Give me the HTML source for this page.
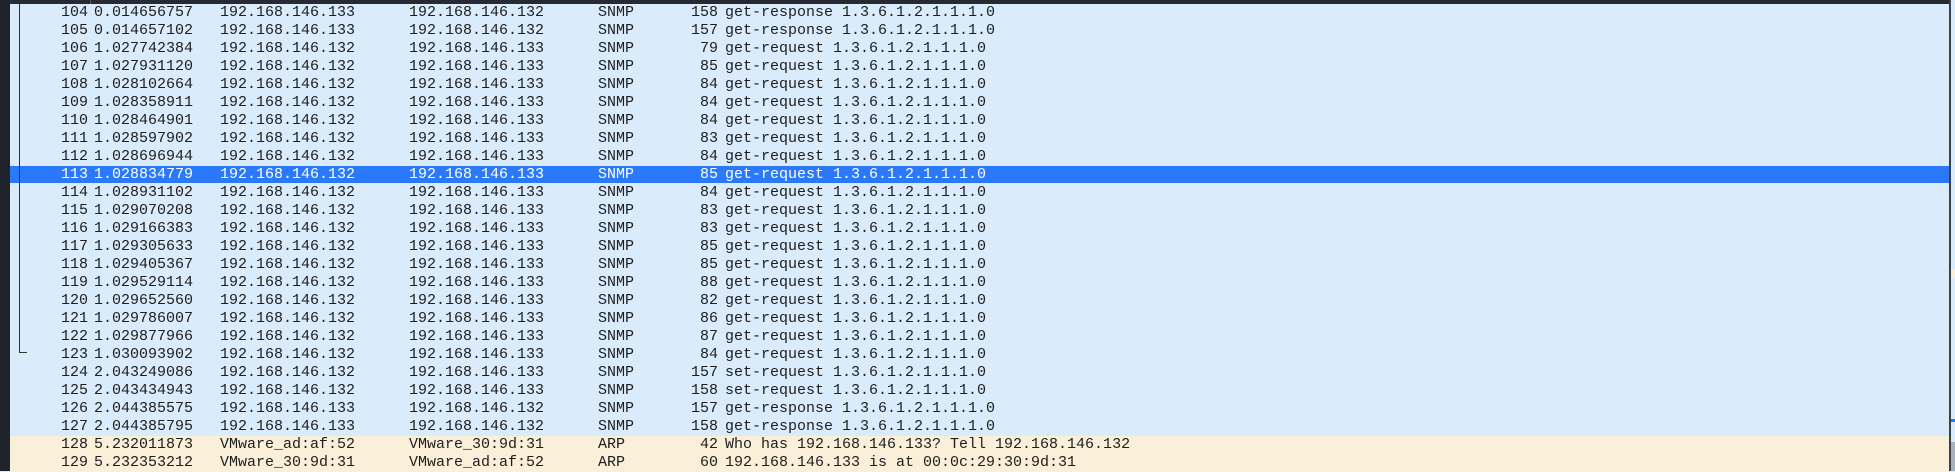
<!DOCTYPE html>
<html><head><style>
body{margin:0;width:1955px;height:471px;overflow:hidden;background:#daebfc;position:relative;font-family:"Liberation Mono",monospace;font-size:15px;color:#1e1e1e}
.hdr{position:absolute;left:0;top:0;width:1949px;height:4px;background:#262a33}
.l{position:absolute;left:0;top:0;width:10px;height:471px;background:#1f232b}
.r{position:absolute;top:4px;left:10px;width:1939px;height:18px;line-height:18px;white-space:pre}
.r span{position:absolute}
.n{right:calc(1939px - 78px);text-align:right}
.o{background:#faf0d9}
.s{background:#2a79fb;color:#fff}
.tree{position:absolute;left:19px;top:4px;width:1px;height:349px;background:#333}
.tree2{position:absolute;left:19px;top:352px;width:8px;height:1px;background:#333}
.sb{position:absolute;left:1949px;top:0;width:2px;height:471px;background:#3a3f48}
</style></head><body>
<div class="hdr"></div><div class="l"></div>
<div style="position:absolute;left:90px;top:0;width:1px;height:4px;background:#555"></div>
<div id="rows"></div>
<div class="r" style="top:4px"><span style="right:1861px">104</span><span style="left:84px">0.014656757</span><span style="left:210px">192.168.146.133</span><span style="left:399px">192.168.146.132</span><span style="left:588px">SNMP</span><span style="right:1231px">158</span><span style="left:715px">get-response 1.3.6.1.2.1.1.1.0</span></div>
<div class="r" style="top:22px"><span style="right:1861px">105</span><span style="left:84px">0.014657102</span><span style="left:210px">192.168.146.133</span><span style="left:399px">192.168.146.132</span><span style="left:588px">SNMP</span><span style="right:1231px">157</span><span style="left:715px">get-response 1.3.6.1.2.1.1.1.0</span></div>
<div class="r" style="top:40px"><span style="right:1861px">106</span><span style="left:84px">1.027742384</span><span style="left:210px">192.168.146.132</span><span style="left:399px">192.168.146.133</span><span style="left:588px">SNMP</span><span style="right:1231px">79</span><span style="left:715px">get-request 1.3.6.1.2.1.1.1.0</span></div>
<div class="r" style="top:58px"><span style="right:1861px">107</span><span style="left:84px">1.027931120</span><span style="left:210px">192.168.146.132</span><span style="left:399px">192.168.146.133</span><span style="left:588px">SNMP</span><span style="right:1231px">85</span><span style="left:715px">get-request 1.3.6.1.2.1.1.1.0</span></div>
<div class="r" style="top:76px"><span style="right:1861px">108</span><span style="left:84px">1.028102664</span><span style="left:210px">192.168.146.132</span><span style="left:399px">192.168.146.133</span><span style="left:588px">SNMP</span><span style="right:1231px">84</span><span style="left:715px">get-request 1.3.6.1.2.1.1.1.0</span></div>
<div class="r" style="top:94px"><span style="right:1861px">109</span><span style="left:84px">1.028358911</span><span style="left:210px">192.168.146.132</span><span style="left:399px">192.168.146.133</span><span style="left:588px">SNMP</span><span style="right:1231px">84</span><span style="left:715px">get-request 1.3.6.1.2.1.1.1.0</span></div>
<div class="r" style="top:112px"><span style="right:1861px">110</span><span style="left:84px">1.028464901</span><span style="left:210px">192.168.146.132</span><span style="left:399px">192.168.146.133</span><span style="left:588px">SNMP</span><span style="right:1231px">84</span><span style="left:715px">get-request 1.3.6.1.2.1.1.1.0</span></div>
<div class="r" style="top:130px"><span style="right:1861px">111</span><span style="left:84px">1.028597902</span><span style="left:210px">192.168.146.132</span><span style="left:399px">192.168.146.133</span><span style="left:588px">SNMP</span><span style="right:1231px">83</span><span style="left:715px">get-request 1.3.6.1.2.1.1.1.0</span></div>
<div class="r" style="top:148px"><span style="right:1861px">112</span><span style="left:84px">1.028696944</span><span style="left:210px">192.168.146.132</span><span style="left:399px">192.168.146.133</span><span style="left:588px">SNMP</span><span style="right:1231px">84</span><span style="left:715px">get-request 1.3.6.1.2.1.1.1.0</span></div>
<div class="r s" style="top:166px;height:17px"><span style="right:1861px">113</span><span style="left:84px">1.028834779</span><span style="left:210px">192.168.146.132</span><span style="left:399px">192.168.146.133</span><span style="left:588px">SNMP</span><span style="right:1231px">85</span><span style="left:715px">get-request 1.3.6.1.2.1.1.1.0</span></div>
<div class="r" style="top:184px"><span style="right:1861px">114</span><span style="left:84px">1.028931102</span><span style="left:210px">192.168.146.132</span><span style="left:399px">192.168.146.133</span><span style="left:588px">SNMP</span><span style="right:1231px">84</span><span style="left:715px">get-request 1.3.6.1.2.1.1.1.0</span></div>
<div class="r" style="top:202px"><span style="right:1861px">115</span><span style="left:84px">1.029070208</span><span style="left:210px">192.168.146.132</span><span style="left:399px">192.168.146.133</span><span style="left:588px">SNMP</span><span style="right:1231px">83</span><span style="left:715px">get-request 1.3.6.1.2.1.1.1.0</span></div>
<div class="r" style="top:220px"><span style="right:1861px">116</span><span style="left:84px">1.029166383</span><span style="left:210px">192.168.146.132</span><span style="left:399px">192.168.146.133</span><span style="left:588px">SNMP</span><span style="right:1231px">83</span><span style="left:715px">get-request 1.3.6.1.2.1.1.1.0</span></div>
<div class="r" style="top:238px"><span style="right:1861px">117</span><span style="left:84px">1.029305633</span><span style="left:210px">192.168.146.132</span><span style="left:399px">192.168.146.133</span><span style="left:588px">SNMP</span><span style="right:1231px">85</span><span style="left:715px">get-request 1.3.6.1.2.1.1.1.0</span></div>
<div class="r" style="top:256px"><span style="right:1861px">118</span><span style="left:84px">1.029405367</span><span style="left:210px">192.168.146.132</span><span style="left:399px">192.168.146.133</span><span style="left:588px">SNMP</span><span style="right:1231px">85</span><span style="left:715px">get-request 1.3.6.1.2.1.1.1.0</span></div>
<div class="r" style="top:274px"><span style="right:1861px">119</span><span style="left:84px">1.029529114</span><span style="left:210px">192.168.146.132</span><span style="left:399px">192.168.146.133</span><span style="left:588px">SNMP</span><span style="right:1231px">88</span><span style="left:715px">get-request 1.3.6.1.2.1.1.1.0</span></div>
<div class="r" style="top:292px"><span style="right:1861px">120</span><span style="left:84px">1.029652560</span><span style="left:210px">192.168.146.132</span><span style="left:399px">192.168.146.133</span><span style="left:588px">SNMP</span><span style="right:1231px">82</span><span style="left:715px">get-request 1.3.6.1.2.1.1.1.0</span></div>
<div class="r" style="top:310px"><span style="right:1861px">121</span><span style="left:84px">1.029786007</span><span style="left:210px">192.168.146.132</span><span style="left:399px">192.168.146.133</span><span style="left:588px">SNMP</span><span style="right:1231px">86</span><span style="left:715px">get-request 1.3.6.1.2.1.1.1.0</span></div>
<div class="r" style="top:328px"><span style="right:1861px">122</span><span style="left:84px">1.029877966</span><span style="left:210px">192.168.146.132</span><span style="left:399px">192.168.146.133</span><span style="left:588px">SNMP</span><span style="right:1231px">87</span><span style="left:715px">get-request 1.3.6.1.2.1.1.1.0</span></div>
<div class="r" style="top:346px"><span style="right:1861px">123</span><span style="left:84px">1.030093902</span><span style="left:210px">192.168.146.132</span><span style="left:399px">192.168.146.133</span><span style="left:588px">SNMP</span><span style="right:1231px">84</span><span style="left:715px">get-request 1.3.6.1.2.1.1.1.0</span></div>
<div class="r" style="top:364px"><span style="right:1861px">124</span><span style="left:84px">2.043249086</span><span style="left:210px">192.168.146.132</span><span style="left:399px">192.168.146.133</span><span style="left:588px">SNMP</span><span style="right:1231px">157</span><span style="left:715px">set-request 1.3.6.1.2.1.1.1.0</span></div>
<div class="r" style="top:382px"><span style="right:1861px">125</span><span style="left:84px">2.043434943</span><span style="left:210px">192.168.146.132</span><span style="left:399px">192.168.146.133</span><span style="left:588px">SNMP</span><span style="right:1231px">158</span><span style="left:715px">set-request 1.3.6.1.2.1.1.1.0</span></div>
<div class="r" style="top:400px"><span style="right:1861px">126</span><span style="left:84px">2.044385575</span><span style="left:210px">192.168.146.133</span><span style="left:399px">192.168.146.132</span><span style="left:588px">SNMP</span><span style="right:1231px">157</span><span style="left:715px">get-response 1.3.6.1.2.1.1.1.0</span></div>
<div class="r" style="top:418px"><span style="right:1861px">127</span><span style="left:84px">2.044385795</span><span style="left:210px">192.168.146.133</span><span style="left:399px">192.168.146.132</span><span style="left:588px">SNMP</span><span style="right:1231px">158</span><span style="left:715px">get-response 1.3.6.1.2.1.1.1.0</span></div>
<div class="r o" style="top:436px"><span style="right:1861px">128</span><span style="left:84px">5.232011873</span><span style="left:210px">VMware_ad:af:52</span><span style="left:399px">VMware_30:9d:31</span><span style="left:588px">ARP</span><span style="right:1231px">42</span><span style="left:715px">Who has 192.168.146.133? Tell 192.168.146.132</span></div>
<div class="r o" style="top:454px"><span style="right:1861px">129</span><span style="left:84px">5.232353212</span><span style="left:210px">VMware_30:9d:31</span><span style="left:399px">VMware_ad:af:52</span><span style="left:588px">ARP</span><span style="right:1231px">60</span><span style="left:715px">192.168.146.133 is at 00:0c:29:30:9d:31</span></div>
<div class="tree"></div><div class="tree2"></div>
<div class="sb"></div>
<div style="position:absolute;left:1951px;top:269px;width:4px;height:9px;background:#faf0d9"></div>
<div style="position:absolute;left:1951px;top:419px;width:4px;height:3px;background:#2a79fb"></div>
<div style="position:absolute;left:1951px;top:442px;width:4px;height:29px;background:#a9b1ba"></div>
</body></html>
